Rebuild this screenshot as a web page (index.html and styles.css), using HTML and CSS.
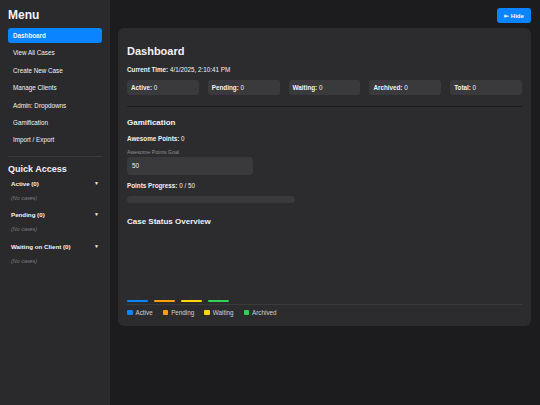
FILE: index.html
```html
<!DOCTYPE html>
<html lang="en">
<head>
    <meta charset="UTF-8">
    <meta name="viewport" content="width=device-width, initial-scale=1.0">
    <title>Case Manager</title>
    <link rel="stylesheet" href="styles.css">
</head>
<body>

<div class="app">
    <aside class="sidebar">
        <h2 class="menu-title">Menu</h2>
        <ul class="nav">
            <li class="active">Dashboard</li>
            <li>View All Cases</li>
            <li>Create New Case</li>
            <li>Manage Clients</li>
            <li>Admin: Dropdowns</li>
            <li>Gamification</li>
            <li>Import / Export</li>
        </ul>

        <h3 class="quick-title">Quick Access</h3>
        <div class="quick-group">
            <div class="quick-head"><span>Active (0)</span><span class="caret">&#9660;</span></div>
            <p class="empty">(No cases)</p>
        </div>
        <div class="quick-group">
            <div class="quick-head"><span>Pending (0)</span><span class="caret">&#9660;</span></div>
            <p class="empty">(No cases)</p>
        </div>
        <div class="quick-group">
            <div class="quick-head"><span>Waiting on Client (0)</span><span class="caret">&#9660;</span></div>
            <p class="empty">(No cases)</p>
        </div>
    </aside>

    <main class="main">
        <div class="topbar">
            <button class="hide-btn">&#8676; Hide</button>
        </div>

        <section class="card">
            <h1>Dashboard</h1>
            <p class="line"><b>Current Time:</b> 4/1/2025, 2:10:41 PM</p>

            <div class="stats">
                <div class="stat"><b>Active:</b> 0</div>
                <div class="stat"><b>Pending:</b> 0</div>
                <div class="stat"><b>Waiting:</b> 0</div>
                <div class="stat"><b>Archived:</b> 0</div>
                <div class="stat"><b>Total:</b> 0</div>
            </div>

            <hr class="divider">

            <h2>Gamification</h2>
            <p class="line"><b>Awesome Points:</b> 0</p>
            <label class="field-label">Awesome Points Goal</label>
            <div class="input">50</div>
            <p class="line"><b>Points Progress:</b> 0 / 50</p>
            <div class="progress"><div class="progress-fill" style="width: 0%"></div></div>

            <h2 class="overview-title">Case Status Overview</h2>
            <div class="chart">
                <div class="bar-col"><span>0</span><div class="bar blue"></div></div>
                <div class="bar-col"><span>0</span><div class="bar orange"></div></div>
                <div class="bar-col"><span>0</span><div class="bar yellow"></div></div>
                <div class="bar-col"><span>0</span><div class="bar green"></div></div>
            </div>
            <div class="legend">
                <span><i class="blue"></i>Active</span>
                <span><i class="orange"></i>Pending</span>
                <span><i class="yellow"></i>Waiting</span>
                <span><i class="green"></i>Archived</span>
            </div>
        </section>
    </main>
</div>

</body>
</html>
```

FILE: styles.css
```css
body {
    font-family: "Liberation Sans", Arial, sans-serif;
    background-color: #1c1c1e;
    color: #f2f2f7;
    margin: 0;
}
.app {
    display: flex;
    height: 405px;
}
.sidebar {
    width: 110px;
    flex-shrink: 0;
    background-color: #2a2a2c;
    padding: 8px 8px 0 8px;
    box-sizing: border-box;
}
.menu-title {
    font-size: 12px;
    margin: 0 0 6px 0;
}
.nav {
    list-style: none;
    margin: 0;
    padding: 0 0 6px 0;
    border-bottom: 1px solid #3a3a3c;
}
.nav li {
    font-size: 6.3px;
    height: 15px;
    line-height: 15px;
    padding: 0 5px;
    margin-bottom: 2.4px;
    border-radius: 3px;
}
.nav li.active {
    background-color: #0a84ff;
    font-weight: bold;
}
.quick-title {
    font-size: 9px;
    margin: 7px 0 6px 0;
}
.quick-group {
    padding: 0 3px;
    margin-bottom: 10.5px;
}
.quick-head {
    display: flex;
    justify-content: space-between;
    font-size: 6.2px;
    font-weight: bold;
}
.caret {
    font-size: 5px;
}
.empty {
    font-size: 5.4px;
    font-style: italic;
    color: #7c7c80;
    margin: 8px 0 0 0;
}
.main {
    flex: 1;
    padding: 8px 9px 0 8px;
}
.topbar {
    display: flex;
    justify-content: flex-end;
    margin-bottom: 5px;
}
.hide-btn {
    background-color: #0a84ff;
    color: #fff;
    border: none;
    border-radius: 3px;
    font-family: inherit;
    font-size: 6px;
    font-weight: bold;
    height: 15px;
    width: 34px;
    padding: 0;
}
.card {
    background-color: #2c2c2e;
    border-radius: 6px;
    padding: 17px 9px 10px 9px;
}
.card h1 {
    font-size: 11px;
    margin: 0 0 9px 0;
}
.card h2 {
    font-size: 8px;
    margin: 0 0 8px 0;
}
.line {
    font-size: 6.3px;
    margin: 0 0 7px 0;
}
.stats {
    display: grid;
    grid-template-columns: repeat(5, 1fr);
    gap: 9px;
}
.stat {
    background-color: #3a3a3c;
    border-radius: 3px;
    height: 15px;
    line-height: 15px;
    padding: 0 4px;
    font-size: 6.3px;
}
.divider {
    border: none;
    border-top: 1px solid #1c1c1e;
    margin: 11px 0 11px 0;
}
.field-label {
    display: block;
    font-size: 5.3px;
    color: #8e8e93;
    margin: 3px 0 2px 0;
}
.input {
    width: 126px;
    height: 18px;
    line-height: 18px;
    background-color: #3a3a3c;
    border-radius: 4px;
    padding: 0 5px;
    box-sizing: border-box;
    font-size: 6.3px;
    margin-bottom: 7px;
}
.progress {
    width: 168px;
    height: 7px;
    background-color: #3a3a3c;
    border-radius: 4px;
    margin: 3px 0 14px 0;
}
.progress-fill {
    height: 100%;
    background-color: #30d158;
    border-radius: 4px;
}
.overview-title {
    margin-bottom: 0;
}
.chart {
    display: flex;
    align-items: flex-end;
    gap: 6px;
    height: 68px;
    border-bottom: 1px solid #3a3a3c;
    padding-bottom: 2px;
}
.bar-col {
    width: 21px;
    text-align: center;
}
.bar-col span {
    display: block;
    font-size: 4px;
    color: #3a3a3c;
}
.bar {
    height: 2px;
    border-radius: 1px;
}
.blue { background-color: #0a84ff; }
.orange { background-color: #ff9f0a; }
.yellow { background-color: #ffd60a; }
.green { background-color: #30d158; }
.legend {
    display: flex;
    gap: 10px;
    margin-top: 4px;
    font-size: 6.3px;
    color: #d1d1d6;
}
.legend span {
    display: flex;
    align-items: center;
}
.legend i {
    width: 5.5px;
    height: 5.5px;
    border-radius: 1px;
    margin-right: 3px;
}
```
